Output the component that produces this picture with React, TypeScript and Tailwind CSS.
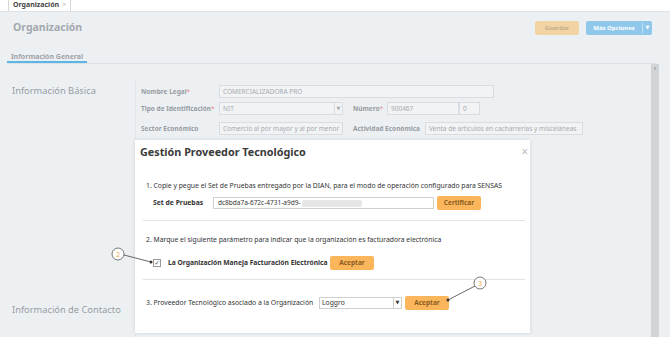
import React from 'react';

const font = { fontFamily: '"Noto Sans", "DejaVu Sans", sans-serif' };

const Field: React.FC<{ w: string; text?: string; caret?: boolean }> = ({ w, text, caret }) => (
  <div className={`${w} h-[13px] border border-[#d9dde2] bg-[#f1f3f5] flex items-center`}>
    <span className="flex-1 pl-[3px] text-[6.5px] font-normal text-[#a7abb0] whitespace-nowrap overflow-hidden">{text}</span>
    {caret && (
      <span className="w-[8px] h-full border-l border-[#d9dde2] flex items-center justify-center text-[5px] text-[#a7abb0]">▼</span>
    )}
  </div>
);

const OrangeButton: React.FC<{ label: string; w: string }> = ({ label, w }) => (
  <button className={`${w} h-[14px] rounded-[2px] bg-[#fbb65b] text-[#8c5d22] text-[6.5px] font-bold flex items-center justify-center`}>
    {label}
  </button>
);

export default function App() {
  return (
    <div className="relative w-[670px] h-[337px] overflow-hidden bg-[#edf0f3]" style={font}>
      {/* tab strip */}
      <div className="h-[12px] bg-white border-b border-[#dde2e7] flex items-end pl-[8px]">
        <div className="h-[12px] px-[4px] border border-b-0 border-[#d3d8dd] bg-white flex items-center gap-[3px]">
          <span className="text-[7px] font-bold text-[#444]">Organización</span>
          <span className="text-[7px] text-[#bbb]">×</span>
        </div>
      </div>

      {/* header */}
      <div className="h-[32px] flex items-center pl-[13px] pr-[18px]">
        <span className="text-[10.5px] font-bold text-[#a3a8ae]">Organización</span>
        <div className="ml-auto flex gap-[7px]">
          <button className="w-[44px] h-[14px] rounded-[2px] bg-[#f1d3a4] text-[#c4ad88] text-[6px] font-bold">Guardar</button>
          <div className="w-[66px] h-[14px] rounded-[2px] bg-[#90c8ec] flex items-center text-white text-[6px] font-bold">
            <span className="flex-1 text-center">Más Opciones</span>
            <span className="w-[10px] h-[10px] border-l border-[#c3e0f5] flex items-center justify-center text-[5px]">▼</span>
          </div>
        </div>
      </div>

      {/* sub tabs */}
      <div className="h-[20px] mx-[7px] mr-[13px] border-b border-[#dde1e6] flex items-end">
        <div className="w-[80px] h-full border-b-2 border-[#5db5e6] flex items-end justify-center pb-[1px]">
          <span className="text-[7px] leading-[7px] font-bold text-[#9ea3a9]">Información General</span>
        </div>
      </div>

      {/* content */}
      <div className="flex">
        <div className="w-[135px] pl-[12px] pt-[20px] flex flex-col">
          <span className="text-[9.3px] text-[#979ca2] leading-[14px]">Información Básica</span>
          <span className="mt-[205px] text-[9.3px] text-[#979ca2] leading-[14px]">Información de Contacto</span>
        </div>
        <div className="w-[516px] h-[280px] border-l border-[#e1e4e8] mt-[17px] pl-[5px] pt-[4px] flex flex-col gap-[4px] text-[6.5px] font-bold text-[#979ca2]">
          <div className="flex items-center">
            <span className="w-[78px]">Nombre Legal<span className="text-[#e9a7a7]">*</span></span>
            <Field w="w-[275px]" text="COMERCIALIZADORA PRO" />
          </div>
          <div className="flex items-center">
            <span className="w-[78px]">Tipo de Identificación<span className="text-[#e9a7a7]">*</span></span>
            <Field w="w-[124px]" text="NIT" caret />
            <span className="ml-[10px] w-[34px]">Número<span className="text-[#e9a7a7]">*</span></span>
            <Field w="w-[72px]" text="900467" />
            <Field w="w-[21px]" text="0" />
          </div>
          <div className="flex items-center mt-[3px]">
            <span className="w-[78px]">Sector Económico</span>
            <Field w="w-[124px]" text="Comercio al por mayor y al por menor" />
            <span className="ml-[10px] w-[72px]">Actividad Económica</span>
            <Field w="w-[158px]" text="Venta de artículos en cacharrerías y misceláneas" />
          </div>
        </div>
        <div className="w-[8px] h-[273px] bg-[#d2d5d8] flex flex-col items-center">
          <span className="text-[4px] text-[#aaa] leading-[8px]">▲</span>
        </div>
      </div>

      {/* modal */}
      <div className="absolute left-[135px] top-[140px] w-[395px] h-[193px] bg-white shadow-[0_0_4px_rgba(0,0,0,0.12)] text-[#333]">
        <div className="h-[24px] flex items-center pl-[5px] pr-[2px]">
          <span className="text-[10.8px] font-bold text-[#3a3a3a]">Gestión Proveedor Tecnológico</span>
          <span className="ml-auto text-[12px] text-[#bbb] leading-none">×</span>
        </div>
        <div className="mt-[17px] h-[10px] pl-[11px] flex items-center text-[6.8px] whitespace-nowrap">
          1. Copie y pegue el Set de Pruebas entregado por la DIAN, para el modo de operación configurado para SENSAS
        </div>
        <div className="mt-[5px] h-[14px] pl-[18px] flex items-center">
          <span className="w-[60px] text-[6.8px] font-bold">Set de Pruebas</span>
          <div className="w-[221px] h-[12px] border border-[#cfcfcf] flex items-center pl-[4px] text-[6.5px]">
            dc8bda7a-672c-4731-a9d9-
            <span className="ml-[2px] w-[60px] h-[7px] bg-[#e6e6e6] rounded-[2px]" />
          </div>
          <div className="ml-[3px]"><OrangeButton label="Certificar" w="w-[44px]" /></div>
        </div>
        <div className="mt-[10px] ml-[8px] mr-[5px] h-px bg-[#e3e3e3]" />
        <div className="mt-[14px] h-[10px] pl-[11px] flex items-center text-[6.8px] whitespace-nowrap">
          2. Marque el siguiente parámetro para indicar que la organización es facturadora electrónica
        </div>
        <div className="mt-[11px] h-[14px] pl-[18px] flex items-center">
          <span className="w-[8px] h-[8px] border border-[#999] flex items-center justify-center text-[6px] leading-none">✓</span>
          <span className="ml-[7px] w-[162px] text-[6.7px] font-bold whitespace-nowrap">La Organización Maneja Facturación Electrónica</span>
          <OrangeButton label="Aceptar" w="w-[44px]" />
        </div>
        <div className="mt-[9px] ml-[8px] mr-[5px] h-px bg-[#e3e3e3]" />
        <div className="mt-[16px] h-[14px] pl-[11px] flex items-center text-[6.8px] whitespace-nowrap">
          <span className="w-[173px]">3. Proveedor Tecnológico asociado a la Organización</span>
          <div className="w-[83px] h-[12px] border border-[#cfcfcf] flex items-center">
            <span className="flex-1 pl-[2px]">Loggro</span>
            <span className="w-[8px] h-full border-l border-[#cfcfcf] flex items-center justify-center text-[5px]">▼</span>
          </div>
          <div className="ml-[3px]"><OrangeButton label="Aceptar" w="w-[44px]" /></div>
        </div>
      </div>

      {/* callouts */}
      <svg className="absolute left-0 top-0" width="670" height="337">
        <line x1="124" y1="255" x2="151" y2="262" stroke="#444" strokeWidth="0.8" />
        <circle cx="151" cy="262" r="1.5" fill="#333" />
        <circle cx="118" cy="254" r="6" fill="white" stroke="#555" strokeWidth="0.8" />
        <text x="118" y="256.5" fontSize="6.5" textAnchor="middle" fill="#f0a030" fontFamily="Noto Sans">2</text>
        <line x1="475" y1="286" x2="448" y2="300" stroke="#444" strokeWidth="0.8" />
        <circle cx="448" cy="300" r="1.5" fill="#333" />
        <circle cx="480" cy="283" r="6" fill="white" stroke="#555" strokeWidth="0.8" />
        <text x="480" y="285.5" fontSize="6.5" textAnchor="middle" fill="#f0a030" fontFamily="Noto Sans">3</text>
      </svg>
    </div>
  );
}
